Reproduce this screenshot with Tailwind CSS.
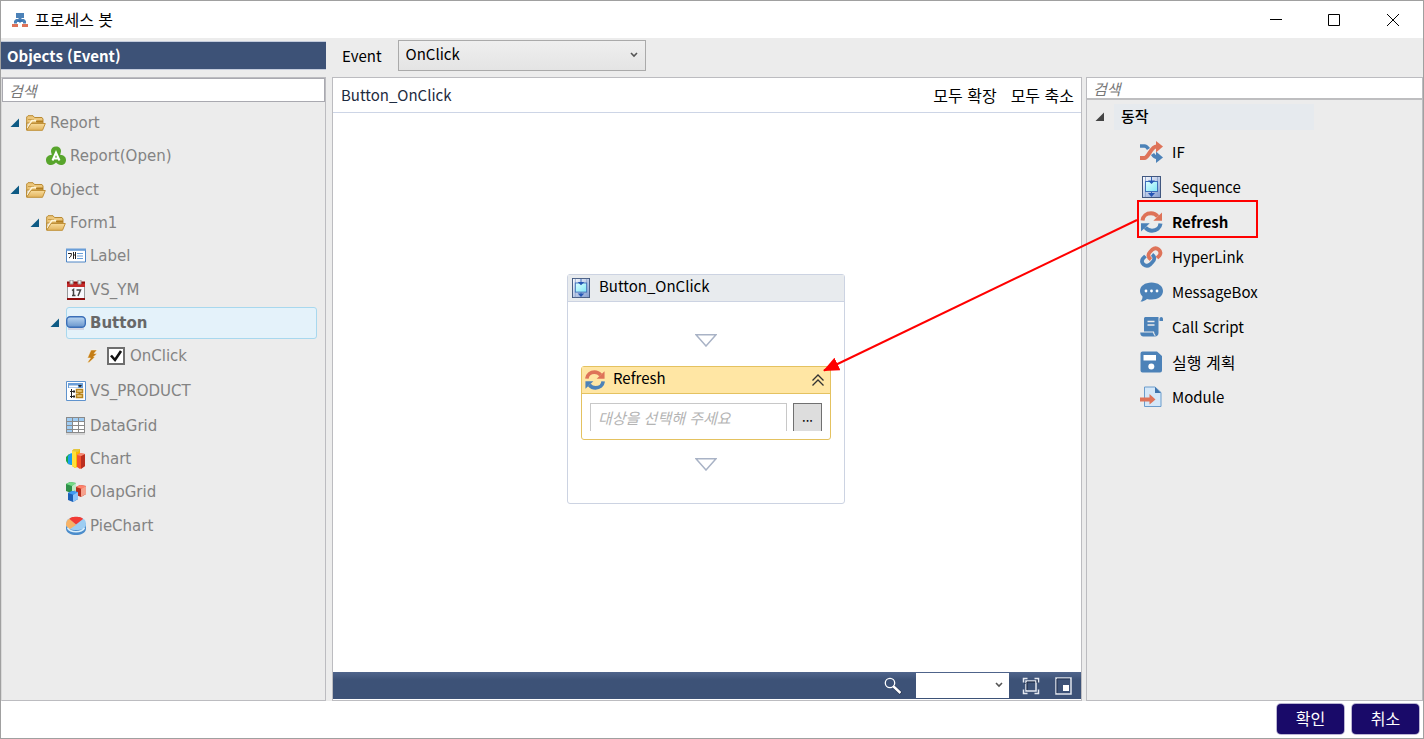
<!DOCTYPE html>
<html lang="ko">
    <head>
        <meta charset="UTF-8">
        <meta name="viewport" content="width=device-width, initial-scale=1.0">
        <title>프로세스 봇</title>
        <script src="https://cdn.jsdelivr.net/npm/@tailwindcss/browser@4"></script>
    </head>
    <body class="h-screen overflow-hidden bg-white font-['Noto_Sans_CJK_KR',sans-serif] text-[15px] leading-5 text-black">

        <!-- shared icons -->
        <svg class="absolute h-0 w-0" xmlns="http://www.w3.org/2000/svg">
            <linearGradient id="gold" x1="0" y1="0" x2="0" y2="1"><stop offset="0" stop-color="#f8dc9c"/><stop offset="1" stop-color="#e2b35c"/></linearGradient>
            <linearGradient id="seqbg" x1="0" y1="0" x2="1" y2="1"><stop offset="0" stop-color="#fff"/><stop offset="1" stop-color="#7f9bd0"/></linearGradient>
            <linearGradient id="seqbox" x1="0" y1="0" x2="1" y2="1"><stop offset="0" stop-color="#e0ffff"/><stop offset="1" stop-color="#7fe6f6"/></linearGradient>
            <linearGradient id="pill" x1="0" y1="0" x2="0" y2="1"><stop offset="0" stop-color="#bcd8f2"/><stop offset="1" stop-color="#6794cc"/></linearGradient>
            <symbol id="folder" viewBox="0 0 20 16">
                <path d="M.7 15V2L2 .7h5L8.500 2.500H16l1 1.500v4H.7z" fill="#edc77c" stroke="#b98a33"/>
                <path d="M2 4.500h6" stroke="#c99b45"/>
                <path d="M1.500 13 4.500 7.500 6 5.500h4l1 1.500" fill="none" stroke="#fff5d8" stroke-width="1.500"/>
                <path d="M.7 15.300 5 8.500h14.300L16.500 15.300z" fill="url(#gold)" stroke="#c09038"/>
                <path d="M10 6.500h7" stroke="#b07c20" stroke-width="2"/>
            </symbol>
            <symbol id="expander" viewBox="0 0 10 10"><path d="M9 0.500V9H.5z" fill="currentColor"/></symbol>
            <symbol id="sequence" viewBox="0 0 19 22" preserveAspectRatio="none">
                <rect x=".5" y=".5" width="18" height="21" fill="url(#seqbg)" stroke="#41577f"/>
                <path d="M3.500 1v20M15.500 1v20" stroke="#93a9d0"/>
                <rect x="3.500" y="5.500" width="12" height="10" fill="url(#seqbox)" stroke="#3f6fb8"/>
                <path d="M9.500 1v4M9.500 16v3" stroke="#2c62b8"/>
                <path d="M6 4.500h7L9.500 8zM6 17h7l-3.500 4z" fill="#2456b5"/>
            </symbol>
            <symbol id="refresh" viewBox="0 0 22 22">
                <path d="M2 9.500C2.500 5 6 2.300 10.500 2.300c3 0 5 1.200 6.700 3.200" fill="none" stroke="#de7359" stroke-width="4"/>
                <path d="M21.500 1.500v8.200h-8.700z" fill="#de7359"/>
                <path d="M20 12.500c-.5 4.500-4 7.200-8.500 7.200-3 0-5-1.200-6.700-3.200" fill="none" stroke="#4c82b8" stroke-width="4"/>
                <path d="M.5 20.500v-8.200h8.700z" fill="#4c82b8"/>
            </symbol>
            <symbol id="chevron" viewBox="0 0 8 6"><path d="M1 1l3 3 3-3" fill="none" stroke="#555" stroke-width="1.600"/></symbol>
            <symbol id="drop" viewBox="0 0 22 13"><path d="M1 .8h20L11 12z" fill="#fff" stroke="#a9b3c6" stroke-width="1.500"/></symbol>
        </svg>

        <div class="relative flex h-full flex-col border border-[#a0a0a0]">

            <!-- title bar -->
            <header class="flex h-[37px] shrink-0 items-center bg-white pl-[11px]">
                <svg class="h-4 w-4" viewBox="0 0 16 16">
                    <path d="M4 1h8v5H9.500v1H12l2 2v2.500h-3V10H5v1.500H2V9l2-2h2.500V6H4z" fill="#4c82b8"/>
                    <path d="M5 8h6l-3 3z" fill="#3972b0"/>
                    <path d="M0 12h6v3H0zM10 12h6v3h-6z" fill="#de7359"/>
                </svg>
                <h1 class="ml-[7px] pb-0.5 text-base leading-5">프로세스 봇</h1>
                <div class="ml-auto flex h-full">
                    <button class="grid h-full w-[58px] place-items-center" aria-label="최소화"><svg class="h-3 w-3" viewBox="0 0 12 12"><path d="M0 5.500h12" stroke="#000"/></svg></button>
                    <button class="grid h-full w-[58px] place-items-center" aria-label="최대화"><svg class="h-3 w-3" viewBox="0 0 12 12"><path d="M.5.5h11v11H.5z" fill="none" stroke="#000"/></svg></button>
                    <button class="grid h-full w-[60px] place-items-center" aria-label="닫기"><svg class="h-3 w-3" viewBox="0 0 12 12"><path d="M0 0l12 12M12 0L0 12" stroke="#000"/></svg></button>
                </div>
            </header>

            <main class="flex min-h-0 flex-1 bg-[#ececec]">

                <!-- object tree -->
                <aside class="flex w-[325px] shrink-0 flex-col pt-[3px]">
                    <h2 class="h-[29px] shrink-0 border-y border-[#c3cbdc] bg-[#3d5277] pl-1.5 text-[15px] leading-[27px] font-bold text-white">Objects (Event)</h2>
                    <div class="mt-[7px] flex-1 border border-[#bcbcc0] border-l-[#dadada]">
                        <input type="text" aria-label="검색" placeholder="검색" class="block h-6 w-full border border-[#a9a9b0] bg-white pl-1.5 text-[15px] italic outline-none placeholder:text-[#777]">
                        <ul class="pt-1 font-['DejaVu_Sans',sans-serif] text-[15px] text-[#838383] [&_svg]:shrink-0">
                            <li class="flex h-[33px] items-center pl-2">
                                <svg class="mr-1.5 h-2.5 w-2.5 text-[#0d5a84]"><use href="#expander"/></svg>
                                <svg class="mr-1 h-4 w-5"><use href="#folder"/></svg>Report
                            </li>
                            <li class="flex h-[34px] items-center pl-11">
                                <svg class="mr-1 h-5 w-5" viewBox="0 0 20 20">
                                    <path d="M10 .5c3 0 5 2 5 4.500 0 1.500-.7 2.500-.7 4 3.500 0 5.700 2 5.700 5s-2 5-5 5c-2.200 0-3.500-1.200-5-2.500C8.500 17.800 7.200 19 5 19c-3 0-5-2-5-5s2.200-5 5.700-5C5.700 7.500 5 6.500 5 5 5 2.500 7 .5 10 .5z" fill="#58a52c"/>
                                    <path d="M6.500 14.500 10 6.500l3.500 8M8 12.500h4" fill="none" stroke="#fff" stroke-width="2"/>
                                </svg>Report(Open)
                            </li>
                            <li class="flex h-[34px] items-center pl-2">
                                <svg class="mr-1.5 h-2.5 w-2.5 text-[#0d5a84]"><use href="#expander"/></svg>
                                <svg class="mr-1 h-4 w-5"><use href="#folder"/></svg>Object
                            </li>
                            <li class="flex h-8 items-center pl-7">
                                <svg class="mr-1.5 h-2.5 w-2.5 text-[#0d5a84]"><use href="#expander"/></svg>
                                <svg class="mr-1 h-4 w-5"><use href="#folder"/></svg>Form1
                            </li>
                            <li class="flex h-[34px] items-center pl-16">
                                <svg class="mr-1 h-4 w-5" viewBox="0 0 20 16">
                                    <path d="M.5 2v12h19V2z" fill="#fff" stroke="#4f86c6"/><path d="M0 1.500h20" stroke="#6a9ed8" stroke-width="2"/>
                                    <path d="M2 5.500h3.500c0 2-.8 3.500-2.500 4.500M7.500 4v7M9.500 4v7M7.500 7h2" fill="none" stroke="#222"/>
                                    <path d="M11 5.500h6M11 8h6M11 10.500h6" stroke="#6a9ed8"/>
                                </svg>Label
                            </li>
                            <li class="flex h-[34px] items-center pl-16">
                                <svg class="mr-1 h-5 w-5" viewBox="0 0 20 20">
                                    <path d="M1 2h18v17H1z" fill="#999"/><path d="M2 7h16v11H2z" fill="#f8f8fc"/>
                                    <path d="M1 2h18v5H1z" fill="#c32a2a"/><path d="M1 2.500h18M1 19h18" stroke="#8f0d0d" stroke-width="2"/>
                                    <path d="M4 0h3v4H4zM12 0h3v4h-3z" fill="#eee" stroke="#999"/>
                                    <path d="M6 10.500 7.500 9.500V16M6 15.500h3.500M10.500 10h4L12 16" fill="none" stroke="#444" stroke-width="1.500"/>
                                </svg>VS_YM
                            </li>
                            <li class="flex h-8 items-center pl-12">
                                <svg class="mr-1.5 h-2.5 w-2.5 text-[#0d5a84]"><use href="#expander"/></svg>
                                <span class="mr-2 flex h-8 flex-1 items-center rounded-[3px] border border-[#a8d8ee] bg-[#e4f2fa] font-bold text-[#686868]">
                                    <svg class="mr-1 -ml-px h-3.5 w-5" viewBox="0 0 20 14">
                                        <path d="M2 13h16" stroke="#ccd" stroke-width="1.500"/>
                                        <rect x=".7" y=".7" width="18.600" height="10.600" rx="3.500" fill="url(#pill)" stroke="#3b6fb8" stroke-width="1.400"/>
                                    </svg>Button
                                </span>
                            </li>
                            <li class="flex h-[34px] items-center pl-[84px]">
                                <svg class="mr-[9px] h-3.5 w-3" viewBox="0 0 12 14"><path d="M5 1h6L8 4.500h3L7.500 8h1.500L3 13.500H1.500L4.500 9H1.500z" fill="#c47d16" stroke="#fff4dc" stroke-width=".5"/></svg>
                                <span class="relative mr-[5px] h-[18px] w-[18px]">
                                    <input type="checkbox" id="onclick" checked class="peer block h-full w-full appearance-none border-2 border-[#6e6e6e] bg-white">
                                    <svg class="pointer-events-none absolute inset-0 hidden h-full w-full peer-checked:block" viewBox="0 0 18 18"><path d="M4 8.500l4 4.500 6-9" fill="none" stroke="#111" stroke-width="2.600"/></svg>
                                </span>
                                <label for="onclick">OnClick</label>
                            </li>
                            <li class="flex h-9 items-center pl-16">
                                <svg class="mr-1 h-5 w-5" viewBox="0 0 20 20">
                                    <path d="M.5.5h19v19H.5z" fill="#fff" stroke="#5f93cd"/>
                                    <path d="M2 2h15v5H2z" fill="#6a9ed8"/><path d="M3 5.500h9" stroke="#fff" stroke-width="2"/><path d="M12 4h4l-2 2.500z" fill="#222"/>
                                    <path d="M5.500 8v9M4 10.500h5M4 15.500h5M8 9v3M8 14v3" stroke="#222"/>
                                    <path d="M10.500 8.500h6v3h-6zM10.500 13.500h6v3h-6z" fill="#f3d58b" stroke="#b9851e" stroke-width="1.500"/><path d="M13.500 11.500v2" stroke="#b9851e" stroke-width="2"/>
                                </svg>VS_PRODUCT
                            </li>
                            <li class="flex h-[33px] items-center pl-16">
                                <svg class="mr-1 h-[18px] w-5" viewBox="0 0 20 18">
                                    <path d="M0 17h19" stroke="#ccc" stroke-width="1.500"/><path d="M0 0h19v16H0z" fill="#8a8a8a"/>
                                    <path d="M1 1h5v3H1zM7 1h5v3H7zM13 1h5v3h-5zM1 5h5v3H1zM1 9h5v3H1zM1 13h5v2H1z" fill="#9fccf3"/>
                                    <path d="M7 5h5v3H7zM13 5h5v3h-5zM7 9h5v3H7zM13 9h5v3h-5zM7 13h5v2H7zM13 13h5v2h-5z" fill="#fff"/>
                                </svg>DataGrid
                            </li>
                            <li class="flex h-[33px] items-center pl-16">
                                <svg class="mr-1 h-5 w-5" viewBox="0 0 20 20">
                                    <path d="M0 8l3-3 3 1v10l-4-1-2-3z" fill="#1ba84a"/><path d="M2 7l3-3 2 1v11l-5-1z" fill="#1a9cf0"/>
                                    <path d="M6 2l2-2h6v17l-5 2-3-2z" fill="#f9b800"/><path d="M6 2h4v17l-4-2z" fill="#ffe03a"/><path d="M6 2l2-2h6l-2 3z" fill="#e2c640"/>
                                    <path d="M11 6l3-2 5 1v12l-5 3-3-2z" fill="#f4512c"/><path d="M15 7l4-2v12l-4 3z" fill="#bb2f20"/><path d="M11 6l3-2 5 1-4 2z" fill="#f58b76"/>
                                </svg>Chart
                            </li>
                            <li class="flex h-[34px] items-center pl-16">
                                <svg class="mr-1 h-5 w-5" viewBox="0 0 20 20">
                                    <path d="M0 2l4-2 6 1v7l-5 3-5-2z" fill="#2f9048"/><path d="M0 2l4-2 6 1-4 3z" fill="#74da85"/><path d="M6 4l4-3v7l-4 2z" fill="#bfe9c5"/>
                                    <path d="M10 5l4-2 6 1v8l-5 3-5-2z" fill="#b52d1d"/><path d="M10 5l4-2 6 1-4 3z" fill="#ff816a"/><path d="M15 7l5-3v8l-5 3z" fill="#f6a18d"/>
                                    <path d="M2 11l4-2 6 1v7l-5 3-5-2z" fill="#1c60b7"/><path d="M2 11l4-2 6 1-4 3z" fill="#409af4"/><path d="M7 13l5-3v7l-5 3z" fill="#8cc4fa"/>
                                </svg>OlapGrid
                            </li>
                            <li class="flex h-[34px] items-center pl-16">
                                <svg class="mr-1 h-5 w-5" viewBox="0 0 20 20">
                                    <path d="M0 8v5c1 8 19 8 20 0V7z" fill="#4b8ccb"/><path d="M0 8C0 3 4 1 10 1s10 2 10 7-4 6-10 6S0 12 0 8z" fill="#9dcdf2"/>
                                    <path d="M10 9 4 2.500C1 3.500 0 6 0 9c1 2 3 4 4 4z" fill="#f8b265"/><path d="M10 8.500 3.500 3C4 0 16 0 17 3z" fill="#f13b36"/>
                                    <path d="M1.500 12c3 5 14 5 17 0" fill="none" stroke="#d9effc" stroke-width="1.500"/>
                                </svg>PieChart
                            </li>
                        </ul>
                    </div>
                </aside>

                <!-- designer -->
                <section class="ml-1.5 flex min-w-0 flex-1 flex-col">
                    <div class="flex h-[39px] shrink-0 items-start pl-2.5">
                        <label for="event" class="pt-2">Event</label>
                        <div class="relative ml-4 mt-0.5">
                            <select id="event" class="h-[31px] w-[248px] appearance-none border border-[#aaa] bg-linear-to-b from-[#efefef] to-[#e4e4e4] pb-1 pl-[7px] text-[15px] outline-none"><option>OnClick</option></select>
                            <svg class="pointer-events-none absolute top-3 right-2 h-1.5 w-2"><use href="#chevron"/></svg>
                        </div>
                    </div>
                    <div class="flex min-h-0 flex-1 flex-col border border-[#bcbcc0] bg-white">
                        <div class="flex h-[35px] shrink-0 items-center border-b border-[#cdd5e6] pr-[7px] pl-2">
                            <span class="text-[#1e2b40]">Button_OnClick</span>
                            <button class="ml-auto text-base leading-5">모두 확장</button>
                            <button class="ml-3.5 text-base leading-5">모두 축소</button>
                        </div>
                        <div class="flex flex-1 items-center justify-center pr-0.5 pb-2">
                            <div class="w-[278px] rounded-[3px] border border-[#ccd3e2] bg-white">
                                <div class="flex h-[27px] items-center border-b border-[#ccd3e2] bg-[#e8ebee] pl-1">
                                    <svg class="h-5 w-[18px]"><use href="#sequence"/></svg>
                                    <span class="ml-[9px] pb-1">Button_OnClick</span>
                                </div>
                                <div class="flex flex-col items-center px-[13px] pt-8 pb-8">
                                    <svg class="h-[13px] w-[22px]"><use href="#drop"/></svg>
                                    <div class="mt-[19px] w-full rounded-[3px] border border-[#e4c260] bg-white">
                                        <div class="flex h-[27px] items-center border-b border-[#e4c260] bg-[#ffe6a4] pr-[5px] pl-[3px]">
                                            <svg class="h-5 w-5"><use href="#refresh"/></svg>
                                            <span class="ml-2 pb-1">Refresh</span>
                                            <button id="collapse" class="ml-auto" aria-label="접기"><svg class="h-3 w-3.5" viewBox="0 0 14 12"><path d="M1.500 6.500 7 1l5.500 5.500M1.500 11.500 7 6l5.500 5.500" fill="none" stroke="#333" stroke-width="1.300"/></svg></button>
                                        </div>
                                        <div class="flex gap-1.5 px-2 pt-[9px] pb-2">
                                            <input type="text" aria-label="대상" placeholder="대상을 선택해 주세요" class="h-7 min-w-0 flex-1 border border-b-0 border-[#c8c8c8] pl-[7px] text-[15px] italic outline-none placeholder:text-[#b4b4b4]">
                                            <button class="h-7 w-[29px] border border-b-0 border-[#707070] bg-[#ddd] text-[13px] leading-5">...</button>
                                        </div>
                                    </div>
                                    <svg class="mt-[18px] h-[13px] w-[22px]"><use href="#drop"/></svg>
                                </div>
                            </div>
                        </div>
                        <div class="mb-px flex h-[27px] shrink-0 items-center bg-linear-to-b from-[#50658c] to-[#3d5277] to-30% pr-2">
                            <svg class="ml-auto h-[18px] w-[18px]" viewBox="0 0 18 18"><circle cx="6" cy="6" r="4.700" fill="none" stroke="#fff" stroke-width="1.300"/><path d="M9.500 9.500l7.500 7" stroke="#1c2a48" stroke-width="3.500"/><path d="M9 9l7.500 7" stroke="#fff" stroke-width="2.500"/></svg>
                            <div class="relative ml-3.5">
                                <select aria-label="배율" class="block h-[25px] w-[93px] appearance-none bg-white outline-none"><option></option></select>
                                <svg class="pointer-events-none absolute top-[9px] right-1.5 h-1.5 w-2"><use href="#chevron"/></svg>
                            </div>
                            <button class="ml-[13px]" aria-label="화면에 맞춤"><svg class="h-[18px] w-[18px]" viewBox="0 0 18 18"><path d="M1.500 5.500v-4h4M12.500 1.500h4v4M16.500 12.500v4h-4M5.500 16.500h-4v-4" fill="none" stroke="#e4e8f0" stroke-width="1.500"/><path d="M4 4h10v10H4z" fill="none" stroke="#e4e8f0" stroke-width="1.500"/><path d="M5 13V5h8M2.500 6.500h1M15 2.700v3" fill="none" stroke="#16223c"/></svg></button>
                            <button class="ml-[15px] mr-px" aria-label="개요"><svg class="h-[18px] w-[17px]" viewBox="0 0 17 18"><path d="M1 1h15v16H1z" fill="none" stroke="#dfe4ec" stroke-width="1.500"/><path d="M2 16V2h13" fill="none" stroke="#22304e"/><path d="M8 8h6v6H8z" fill="#fff"/></svg></button>
                        </div>
                    </div>
                </section>

                <!-- action toolbox -->
                <aside class="ml-1 flex w-[337px] shrink-0 flex-col pt-[39px]">
                    <div class="flex-1 border border-[#bcbcc0]">
                        <input type="text" aria-label="검색" placeholder="검색" class="block h-[22px] w-full border-b-2 border-[#bebec0] bg-white pl-1.5 text-[15px] italic outline-none placeholder:text-[#777]">
                        <div class="mt-1 flex h-[26px] items-center pl-2">
                            <svg class="h-2.5 w-2.5 text-[#444]"><use href="#expander"/></svg>
                            <h3 class="ml-[9px] h-[26px] w-[200px] bg-[#e6eaee] pl-[7px] text-[15px] leading-6 font-medium">동작</h3>
                        </div>
                        <ul class="pt-1 pl-[53px]">
                            <li class="flex h-[35px] items-center gap-[9px]">
                                <svg class="h-[22px] w-[23px]" viewBox="0 0 23 22">
                                    <path d="M0 5h4.500c1.500 0 3 1.500 4 3M12.500 13c1.500 2.500 3 3.500 5.500 3.500" fill="none" stroke="#4c82b8" stroke-width="3.600"/><path d="M16 10.500 23 16.500l-7 5.500z" fill="#4c82b8"/>
                                    <path d="M0 17h4.500c4 0 6.500-11.500 12-11.500h1" fill="none" stroke="#de7359" stroke-width="4"/><path d="M16 0 23 5.500l-7 6z" fill="#de7359"/>
                                </svg>IF
                            </li>
                            <li class="flex h-[35px] items-center gap-[9px]"><span class="w-[23px] pl-0.5"><svg class="h-[22px] w-[19px]"><use href="#sequence"/></svg></span>Sequence</li>
                            <li class="relative flex h-[35px] items-center gap-[9px] font-bold">
                                <svg class="h-[22px] w-[23px]"><use href="#refresh"/></svg>Refresh
                                <span id="mark" class="absolute -top-1 -left-[3px] h-[38px] w-[121px] border-2 border-[#f00]"></span>
                            </li>
                            <li class="flex h-[35px] items-center gap-[9px]">
                                <svg class="h-[22px] w-[23px]" viewBox="0 0 23 22" fill="none" stroke-width="3.800">
                                    <path d="M11 13.500C7.500 11 8 8 10 6l2.500-2.500C16.500 0 22.500 5 19.500 9.500L17 12" stroke="#de7359"/>
                                    <path d="M12 8.500c3.500 2.500 2.500 5.500.5 7.500L10 18.500C6 22-.5 17 3 12.500L5.500 10" stroke="#4c82b8"/>
                                </svg>HyperLink
                            </li>
                            <li class="flex h-[35px] items-center gap-[9px]">
                                <svg class="h-[22px] w-[23px]" viewBox="0 0 23 22"><path d="M11.500 1.500C18 1.500 23 5 23 10s-5 8.500-11.500 8.500c-1.500 0-3-.2-4.500-.6-1.500 1.500-4 2.600-6.500 2.600C2 19 2.500 17.500 2.500 15.500 1 14 0 12 0 10c0-5 5-8.500 11.500-8.500z" fill="#4c82b8"/><g fill="#fff"><circle cx="6" cy="10" r="1.400"/><circle cx="11.500" cy="10" r="1.400"/><circle cx="17" cy="10" r="1.400"/></g></svg>MessageBox
                            </li>
                            <li class="flex h-[35px] items-center gap-[9px]">
                                <svg class="h-[22px] w-[23px]" viewBox="0 0 23 22"><path d="M4 3c0-1.500.5-2 2-2h12.500v16c0 2-1.500 3.500-3.500 3.500H3.500C1.500 20.500.2 19 .2 16.500H4z" fill="#4c82b8"/><path d="M19.500 5V3c0-2.700 3.500-2.700 3.500 0v2z" fill="#4c82b8"/><path d="M7.500 5.500h7M7.500 9h7" stroke="#ececec" stroke-width="1.500"/><path d="M4 16h9.500c.2 2 .8 3 1.800 3.700" fill="none" stroke="#ececec" stroke-width="1.200"/></svg>Call Script
                            </li>
                            <li class="flex h-[35px] items-center gap-[9px] text-base"><svg class="h-[22px] w-[23px]" viewBox="0 0 23 22"><path d="M2.500.5H17L22 5v14.500a2 2 0 0 1-2 2H2.500a2 2 0 0 1-2-2v-17a2 2 0 0 1 2-2z" fill="#4c82b8"/><path d="M3.500 4h12.500v5.500H3.500z" fill="#fff"/><circle cx="11.300" cy="15.500" r="3" fill="#fff"/></svg>실행 계획</li>
                            <li class="flex h-[35px] items-center gap-[9px]">
                                <svg class="h-[22px] w-[23px]" viewBox="0 0 23 22"><path d="M4.500 1H15l6 5.500V20.500H4.500z" fill="#d4e7f8" stroke="#6a9ccc"/><path d="M15 1v6h6z" fill="#3f74ad"/><path d="M0 11.500h9.500V8l6 5.500-6 5V15.500H0z" fill="#de7359"/></svg>Module
                            </li>
                        </ul>
                    </div>
                </aside>
            </main>

            <footer class="flex h-[37px] shrink-0 items-start justify-end gap-2 bg-white pt-[3px] pr-1">
                <button class="h-[30px] w-[67px] rounded-[4px] bg-[#190a69] pb-0.5 text-base text-white ring-1 ring-[#190a69]/30">확인</button>
                <button class="h-[30px] w-[67px] rounded-[4px] bg-[#190a69] pb-0.5 text-base text-white ring-1 ring-[#190a69]/30">취소</button>
            </footer>
        </div>

        <!-- drag arrow, toolbox item to node -->
        <svg class="pointer-events-none absolute inset-0 h-full w-full">
            <defs><marker id="head" markerUnits="userSpaceOnUse" markerWidth="16" markerHeight="14" refX="15" refY="7" orient="auto"><path d="M0 0l16 7-16 7z" fill="#f00"/></marker></defs>
            <line id="arrow-line" stroke="#f00" stroke-width="2" marker-end="url(#head)"/>
        </svg>
    </body>
    <script>
        function drawArrow() {
            const from = document.getElementById('mark').getBoundingClientRect()
            const to = document.getElementById('collapse').getBoundingClientRect()
            const line = document.getElementById('arrow-line')
            line.setAttribute('x1', from.left)
            line.setAttribute('y1', from.top + from.height / 2 + 1)
            line.setAttribute('x2', to.right - 1)
            line.setAttribute('y2', to.top - 3)
        }

        drawArrow()
        window.addEventListener('load', drawArrow)
        window.addEventListener('resize', drawArrow)
    </script>
</html>
